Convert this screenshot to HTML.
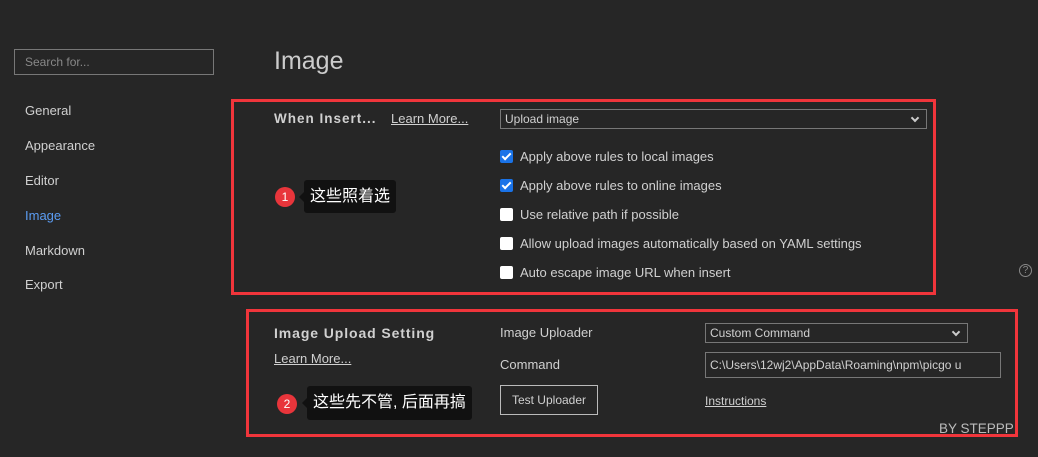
<!DOCTYPE html>
<html><head><meta charset="utf-8"><style>
*{margin:0;padding:0;box-sizing:border-box}
body{width:1038px;height:457px;background:#262626;color:#d0d0d0;font-family:"Liberation Sans","Noto Sans CJK SC",sans-serif;font-size:13px;position:relative;overflow:hidden}
.a{position:absolute;white-space:nowrap}
.red{position:absolute;border:3px solid #f0353b}
.cb{position:absolute;width:13px;height:13px;border-radius:2px;background:#fff}
.cb.on{background:#1a73e8}
.cb.on::after{content:"";position:absolute;left:4px;top:1px;width:3px;height:7px;border:solid #fff;border-width:0 2px 2px 0;transform:rotate(45deg)}
.sel{position:absolute;border:1px solid #777;background:#262626}
.u{text-decoration:underline}
.b{font-weight:bold;font-size:13.5px;letter-spacing:1px}
.tip{position:absolute;background:#111;color:#fff;border-radius:3px;font-size:16px;padding:0 6px}
.tip::before{content:"";position:absolute;left:-5px;top:50%;margin-top:-5px;border:5px solid transparent;border-left:0;border-right-color:#111}
.dot{position:absolute;width:20px;height:20px;border-radius:50%;background:#e8353b;color:#fff;font-size:12px;text-align:center;line-height:20px}
.chev{position:absolute;width:6px;height:6px;border:solid #ccc;border-width:0 2px 2px 0;transform:rotate(45deg)}
</style></head><body>
<div class="a" style="left:14px;top:49px;width:200px;height:26px;border:1px solid #777"></div>
<div class="a" style="left:25px;top:55px;color:#888;font-size:12px">Search for...</div>
<div class="a" style="left:25px;top:103px">General</div>
<div class="a" style="left:25px;top:138px">Appearance</div>
<div class="a" style="left:25px;top:173px">Editor</div>
<div class="a" style="left:25px;top:208px;color:#5b9cf2">Image</div>
<div class="a" style="left:25px;top:243px">Markdown</div>
<div class="a" style="left:25px;top:277px">Export</div>
<div class="a" style="left:274px;top:47px;font-size:25px;color:#ccc">Image</div>

<div class="red" style="left:231px;top:99px;width:705px;height:196px"></div>
<div class="a b" style="left:274px;top:111px">When Insert...</div>
<div class="a u" style="left:391px;top:111px">Learn More...</div>
<div class="sel" style="left:500px;top:109px;width:427px;height:20px"></div>
<div class="a" style="left:505px;top:112px;font-size:12px">Upload image</div>
<div class="chev" style="left:912px;top:115px"></div>
<div class="cb on" style="left:500px;top:150px"></div><div class="a" style="left:520px;top:149px">Apply above rules to local images</div>
<div class="cb on" style="left:500px;top:179px"></div><div class="a" style="left:520px;top:178px">Apply above rules to online images</div>
<div class="cb" style="left:500px;top:208px"></div><div class="a" style="left:520px;top:207px">Use relative path if possible</div>
<div class="cb" style="left:500px;top:237px"></div><div class="a" style="left:520px;top:236px">Allow upload images automatically based on YAML settings</div>
<div class="cb" style="left:500px;top:266px"></div><div class="a" style="left:520px;top:265px">Auto escape image URL when insert</div>
<div class="a" style="left:1019px;top:264px;width:13px;height:13px;border:1px solid #888;border-radius:50%;font-size:10px;line-height:11px;text-align:center;color:#888">?</div>
<div class="dot" style="left:275px;top:187px">1</div>
<div class="tip" style="left:304px;top:180px;height:33px;line-height:33px">这些照着选</div>

<div class="red" style="left:246px;top:309px;width:772px;height:128px"></div>
<div class="a b" style="left:274px;top:325px;font-size:14px;letter-spacing:0.9px">Image Upload Setting</div>
<div class="a u" style="left:274px;top:351px">Learn More...</div>
<div class="a" style="left:500px;top:325px">Image Uploader</div>
<div class="sel" style="left:705px;top:323px;width:263px;height:20px"></div>
<div class="a" style="left:710px;top:326px;font-size:12px">Custom Command</div>
<div class="chev" style="left:953px;top:329px"></div>
<div class="a" style="left:500px;top:357px">Command</div>
<div class="sel" style="left:705px;top:352px;width:296px;height:26px"></div>
<div class="a" style="left:710px;top:358px;font-size:12px">C:\Users\12wj2\AppData\Roaming\npm\picgo u</div>
<div class="a" style="left:500px;top:385px;width:98px;height:30px;border:1px solid #bbb;text-align:center;line-height:28px;font-size:12px">Test Uploader</div>
<div class="a u" style="left:705px;top:394px;font-size:12px">Instructions</div>
<div class="dot" style="left:277px;top:394px">2</div>
<div class="tip" style="left:307px;top:386px;height:34px;line-height:34px">这些先不管, 后面再搞</div>
<div class="a" style="left:939px;top:421px;color:#bbb;font-size:13.5px">BY STEPPP</div>
</body></html>
